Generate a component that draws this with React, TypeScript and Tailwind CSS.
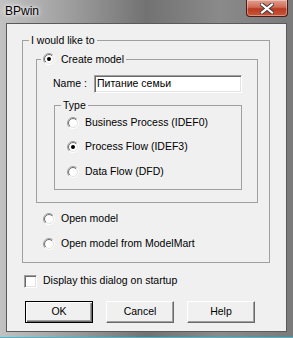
import React from 'react';

const Radio = ({ checked = false }: { checked?: boolean }) => (
  <svg width="12" height="12" viewBox="0 0 12 12" className="shrink-0">
    <defs>
      <linearGradient id="rOuter" x1="0" y1="0" x2="1" y2="1">
        <stop offset="0.5" stopColor="#a0a0a0" />
        <stop offset="0.5" stopColor="#ffffff" />
      </linearGradient>
      <linearGradient id="rInner" x1="0" y1="0" x2="1" y2="1">
        <stop offset="0.5" stopColor="#696969" />
        <stop offset="0.5" stopColor="#e3e3e3" />
      </linearGradient>
    </defs>
    <circle cx="6" cy="6" r="5.5" fill="none" stroke="url(#rOuter)" />
    <circle cx="6" cy="6" r="4.5" fill="#fff" stroke="url(#rInner)" />
    {checked && <circle cx="6" cy="6" r="2" fill="#000" />}
  </svg>
);

const Option = ({ label, checked, className = '' }: { label: string; checked?: boolean; className?: string }) => (
  <div className={`flex items-center h-[14px] gap-[6px] ${className}`}>
    <Radio checked={checked} />
    <span>{label}</span>
  </div>
);

const btnBase = 'w-[68px] h-[22px] flex items-center justify-center bg-[#f0f0f0]';

export default function App() {
  return (
    <div className="w-[293px] h-[338px] flex flex-col bg-[linear-gradient(90deg,#c2c2c2_0%,#9c9c9c_25%,#727272_50%,#8a8a8a_75%,#7a7a7a_100%)] font-['Liberation_Sans',Arial,sans-serif] text-black">
      {/* title bar */}
      <div className="h-[23px] flex items-start">
        <span className="pl-[5px] pt-[4px] text-[12px] leading-[14px] [text-shadow:0_0_6px_#fff,0_0_3px_#fff]">BPwin</span>
        <div className="ml-auto mr-[5px] w-[42px] h-[17px] rounded-b-[4px] border border-t-0 border-[#4a1c14] bg-[linear-gradient(180deg,#e2a090_0%,#d06a55_45%,#b83a22_55%,#c9583a_100%)] shadow-[inset_0_0_0_1px_rgba(255,255,255,0.35)] flex items-center justify-center">
          <svg width="14" height="11" viewBox="0 0 14 11">
            <path d="M2 1.5 L12 9.5 M12 1.5 L2 9.5" stroke="#3a3a3a" strokeWidth="4" strokeLinecap="square" />
            <path d="M2 1.5 L12 9.5 M12 1.5 L2 9.5" stroke="#ffffff" strokeWidth="2.2" strokeLinecap="square" />
          </svg>
        </div>
      </div>

      {/* client area */}
      <div className="mx-[6px] h-[309px] border border-[#5a5a5a] bg-[#f0f0f0] text-[10.5px]">
        <fieldset className="ml-[15px] mt-[9px] w-[248px] border border-[#a0a0a0] pb-[11px]">
          <legend className="ml-[6px] px-[2px] leading-[14px]">I would like to</legend>

          <fieldset className="ml-[13px] mt-[5px] w-[222px] border border-[#a0a0a0] pb-[12px]">
            <legend className="ml-[4px] px-[2px] leading-[14px] flex items-center gap-[6px]">
              <Radio checked />
              <span>Create model</span>
            </legend>

            <div className="flex items-center mt-[9px] ml-[16px] h-[18px]">
              <span className="w-[41px]">Name :</span>
              <div className="w-[148px] h-[18px] bg-white border border-t-[#a0a0a0] border-l-[#a0a0a0] border-r-white border-b-white shadow-[inset_1px_1px_0_#696969,inset_-1px_-1px_0_#e3e3e3] flex items-center pl-[2px] font-['Liberation_Sans',Arial,sans-serif]">
                Питание семьи
              </div>
            </div>

            <fieldset className="ml-[17px] mt-[5px] w-[188px] border border-[#a0a0a0] pb-[10px]">
              <legend className="ml-[6px] px-[2px] leading-[14px]">Type</legend>
              <Option label="Business Process (IDEF0)" className="ml-[12px] mt-[4px]" />
              <Option label="Process Flow (IDEF3)" checked className="ml-[12px] mt-[10px]" />
              <Option label="Data Flow (DFD)" className="ml-[12px] mt-[11px]" />
            </fieldset>
          </fieldset>

          <Option label="Open model" className="ml-[20px] mt-[9px]" />
          <Option label="Open model from ModelMart" className="ml-[20px] mt-[11px]" />
        </fieldset>

        <div className="flex items-center gap-[6px] ml-[17px] mt-[11px] h-[14px]">
          <div className="w-[13px] h-[13px] bg-white border border-t-[#a0a0a0] border-l-[#a0a0a0] border-r-white border-b-white shadow-[inset_1px_1px_0_#696969,inset_-1px_-1px_0_#e3e3e3]" />
          <span>Display this dialog on startup</span>
        </div>

        <div className="flex gap-[13px] ml-[18px] mt-[13px]">
          <div className={`${btnBase} border border-black shadow-[inset_1px_1px_0_#fff,inset_-1px_-1px_0_#696969,inset_-2px_-2px_0_#a0a0a0]`}>OK</div>
          <div className={`${btnBase} border border-t-white border-l-white border-r-[#696969] border-b-[#696969] shadow-[inset_-1px_-1px_0_#a0a0a0]`}>Cancel</div>
          <div className={`${btnBase} border border-t-white border-l-white border-r-[#696969] border-b-[#696969] shadow-[inset_-1px_-1px_0_#a0a0a0]`}>Help</div>
        </div>
      </div>

      <div className="mt-auto h-[1px] bg-[#3fb9cf]" />
    </div>
  );
}
